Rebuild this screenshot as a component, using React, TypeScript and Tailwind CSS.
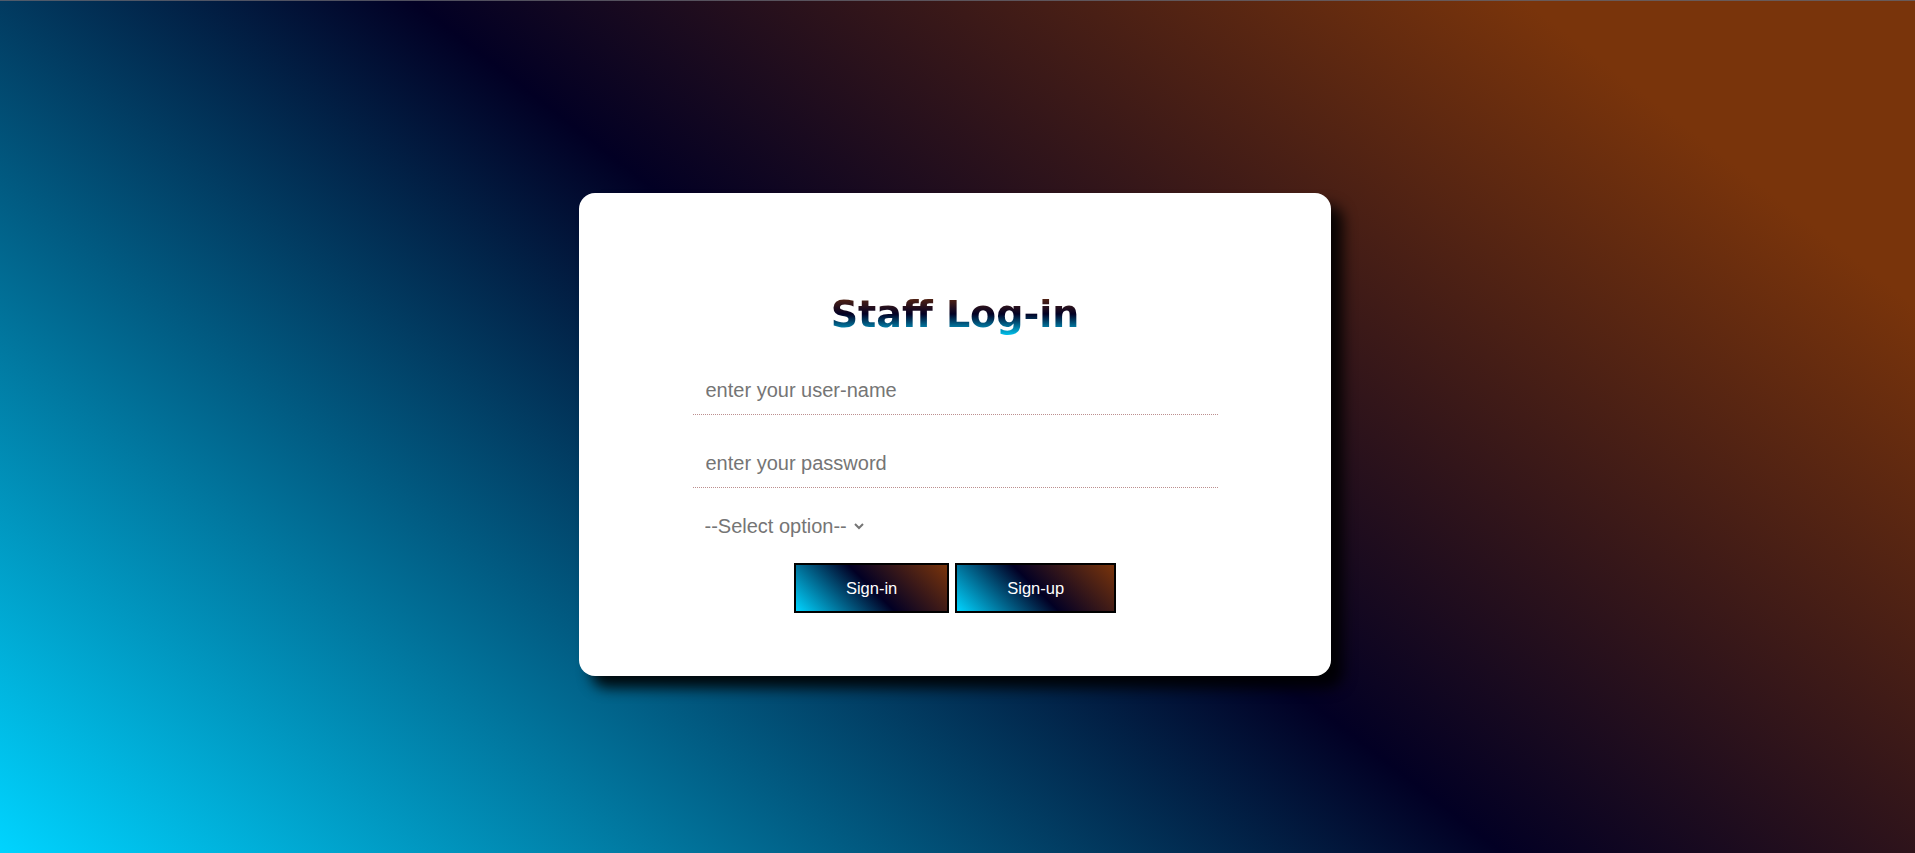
import React, { useState } from 'react';

const btnClass =
    'flex h-[50px] items-center border-2 border-black px-[50px] text-[16.5px] text-white bg-[linear-gradient(45deg,#00d4ff_0%,#020024_50%,#79340b_100%)]';

const inputClass =
    'w-full border-0 border-b border-dotted border-[#bc8f8f] bg-transparent pl-[13px] pt-[12px] pb-[12px] text-[20px] leading-[23px] text-[#333] outline-none placeholder:text-[#757575]';

export default function App() {
    const [user, setUser] = useState('');
    const [pass, setPass] = useState('');
    const [role, setRole] = useState('');

    return (
        <div className="min-h-screen w-full font-['Liberation_Sans',Arial,sans-serif] bg-[linear-gradient(38deg,#00d4ff_0%,#020024_50%,#79340b_87%)]">
            <div className="h-px w-full bg-[rgba(100,100,110,0.8)]" />
            <div className="flex justify-center pt-[192px] pr-[5px]">
                <form
                    onSubmit={e => e.preventDefault()}
                    className="flex w-[752px] flex-col items-center rounded-[16px] bg-white pt-[98px] pb-[63px] shadow-[12px_12px_14px_rgba(0,0,0,0.9)]"
                >
                    <h1 className="bg-[linear-gradient(to_bottom,#79340b_0%,#020024_50%,#00d4ff_100%)] bg-clip-text font-['DejaVu_Sans',sans-serif] text-[38px] font-bold leading-[46px] text-transparent">
                        Staff Log-in
                    </h1>

                    <div className="mt-[30px] w-[525px]">
                        <input
                            type="text"
                            value={user}
                            onChange={e => setUser(e.target.value)}
                            placeholder="enter your user-name"
                            className={inputClass}
                        />
                    </div>
                    <div className="mt-[25px] w-[525px]">
                        <input
                            type="password"
                            value={pass}
                            onChange={e => setPass(e.target.value)}
                            placeholder="enter your password"
                            className={inputClass}
                        />
                    </div>

                    <div className="mt-[26px] w-[525px]">
                        <select
                            value={role}
                            onChange={e => setRole(e.target.value)}
                            className="ml-[8px] w-[166px] border-0 bg-transparent text-[20px] text-[#757575] outline-none"
                        >
                            <option value="">--Select option--</option>
                            <option value="admin">Admin</option>
                            <option value="staff">Staff</option>
                        </select>
                    </div>

                    <div className="mt-[23px] flex gap-[6px]">
                        <button type="submit" className={btnClass}>Sign-in</button>
                        <button type="button" className={btnClass}>Sign-up</button>
                    </div>
                </form>
            </div>
        </div>
    );
}
